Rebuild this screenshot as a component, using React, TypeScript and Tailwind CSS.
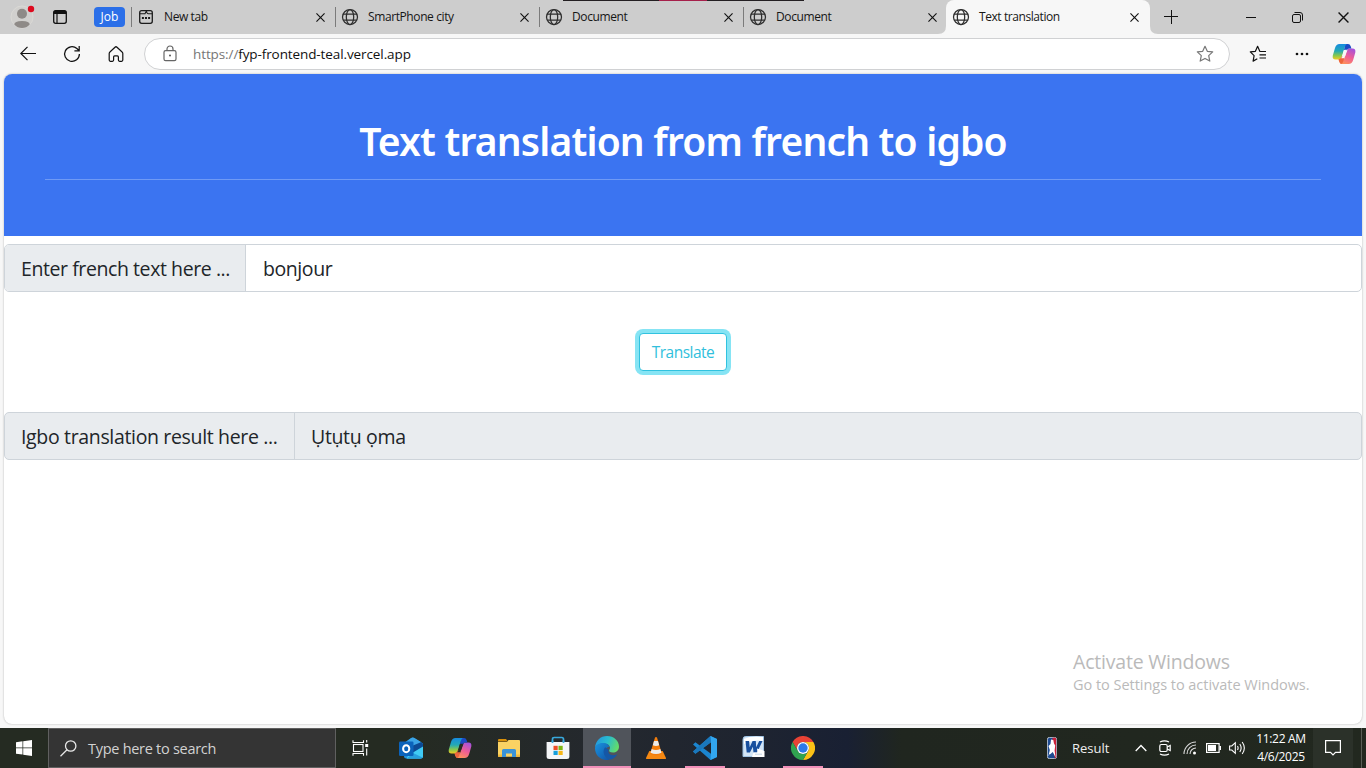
import type { ReactNode } from "react";

function Globe() {
  return (
    <svg width="18" height="18" viewBox="0 0 18 18" fill="none" stroke="#2e2e2e" strokeWidth="1.25" className="shrink-0">
      <circle cx="9" cy="9" r="7.5" />
      <ellipse cx="9" cy="9" rx="3.7" ry="7.5" />
      <path d="M2 6h14M2 12h14" />
    </svg>
  );
}

function NewTabIcon() {
  return (
    <svg width="16" height="16" viewBox="0 0 16 16" fill="none" stroke="#1b1b1b" strokeWidth="1.3" className="shrink-0">
      <rect x="1.700" y="1.700" width="12.600" height="12.600" rx="2" />
      <path d="M1.700 4.700h5.300l1.500-3M8.400 1.700q.3 3 2 3h3.900" strokeWidth="1.1" />
      <path d="M3.900 9h2M7 9h2M10.100 9h2" strokeWidth="1.8" />
    </svg>
  );
}

function Cross({ size = 9 }: { size?: number }) {
  return (
    <svg width={size} height={size} viewBox="0 0 10 10" fill="none" stroke="#111" strokeWidth="1.25" className="shrink-0">
      <path d="M.5.5l9 9M9.500.5l-9 9" />
    </svg>
  );
}

function Tab({ title, icon }: { title: string; icon: ReactNode }) {
  return (
    <div className="flex h-[34px] w-[204px] shrink-0 items-center">
      <div className="h-5 w-px bg-[#7b7b7b]" />
      <div className="flex w-[32px] items-center pl-[5px]">{icon}</div>
      <span className="grow whitespace-nowrap text-[12px] tracking-[-0.4px] text-[#161616]">{title}</span>
      <div className="mr-[10px] flex">
        <Cross />
      </div>
    </div>
  );
}

function TabStrip() {
  return (
    <div className="relative flex h-[34px] shrink-0 items-center bg-[#cdcdcd]">
      <div className="absolute top-0 left-[563px] flex h-px w-[241px] bg-[#231f22]">
        <div className="ml-24 h-px w-12 bg-[#a6204b]" />
      </div>
      <svg width="26" height="26" viewBox="0 0 26 26" className="ml-[10px] shrink-0">
        <circle cx="12" cy="13" r="11" fill="#d1d0ce" stroke="#dcdad7" strokeWidth=".8" />
        <circle cx="12" cy="9.800" r="5" fill="#8e8a87" />
        <path d="M4.300 20.500q0-3.600 7.700-3.600t7.700 3.600q-3 3.600-7.700 3.600t-7.700-3.600z" fill="#8e8a87" />
        <circle cx="21" cy="5" r="3.200" fill="#dd0a1e" />
      </svg>
      <svg width="16" height="16" viewBox="0 0 16 16" className="ml-[16px] shrink-0">
        <rect x="1.700" y="1.700" width="12.600" height="12.600" rx="2" fill="none" stroke="#111" strokeWidth="1.300" />
        <path d="M1.500 5V3.500a2 2 0 0 1 2-2h9a2 2 0 0 1 2 2V5z" fill="#111" />
        <path d="M5 4v10" stroke="#111" strokeWidth="1.200" />
      </svg>
      <div className="ml-[26px] flex h-5 w-[31px] shrink-0 items-center justify-center rounded-[4px] bg-[#2b6fe8] text-[12px] text-white">Job</div>
      <div className="ml-[6px] flex">
        <Tab title="New tab" icon={<span className="pl-[1px]"><NewTabIcon /></span>} />
        <Tab title="SmartPhone city" icon={<Globe />} />
        <Tab title="Document" icon={<Globe />} />
        <Tab title="Document" icon={<Globe />} />
      </div>
      <div className="relative -ml-px flex h-[34px] w-[204px] shrink-0 items-center rounded-t-[8px] bg-[#f7f7f7] pl-[6px]">
        <svg width="8" height="8" viewBox="0 0 8 8" className="absolute bottom-0 -left-2">
          <path d="M8 0v8H0q8 0 8-8z" fill="#f7f7f7" />
        </svg>
        <svg width="8" height="8" viewBox="0 0 8 8" className="absolute -right-2 bottom-0">
          <path d="M0 0v8h8q-8 0-8-8z" fill="#f7f7f7" />
        </svg>
        <Globe />
        <span className="ml-[9px] grow whitespace-nowrap text-[12px] tracking-[-0.42px] text-[#161616]">Text translation</span>
        <div className="mr-[11px] flex">
          <Cross />
        </div>
      </div>
      <svg width="14" height="14" viewBox="0 0 14 14" stroke="#111" className="ml-[14px] shrink-0">
        <path d="M7.500 0v14M0 6.500h14" />
      </svg>
      <svg width="10" height="10" viewBox="0 0 10 10" stroke="#111" className="ml-[68px] shrink-0">
        <path d="M0 5.500h10" />
      </svg>
      <svg width="11" height="11" viewBox="0 0 11 11" fill="none" stroke="#111" className="ml-[36px] shrink-0">
        <rect x=".5" y="2.500" width="8" height="8" rx="1.500" />
        <path d="M2.500.5h5.500a2.500 2.500 0 0 1 2.500 2.500v5.500" />
      </svg>
      <div className="ml-[35px] flex">
        <Cross size={11} />
      </div>
    </div>
  );
}

function Copilot({ id, gap, className }: { id: string; gap: string; className?: string }) {
  return (
    <svg width="24" height="24" viewBox="0 0 24 24" className={className}>
      <defs>
        <linearGradient id={id + "a"} x1="0" y1="0" x2="0" y2="1">
          <stop offset="0" stopColor="#168be0" />
          <stop offset=".45" stopColor="#24a9b5" />
          <stop offset=".75" stopColor="#8ac84c" />
          <stop offset="1" stopColor="#f2cb22" />
        </linearGradient>
        <linearGradient id={id + "b"} x1=".8" y1="0" x2=".3" y2="1">
          <stop offset="0" stopColor="#a452dd" />
          <stop offset=".5" stopColor="#ee5c97" />
          <stop offset="1" stopColor="#ff9358" />
        </linearGradient>
      </defs>
      <path d="M16 6.500h4.500Q24 6.500 23.300 10.500l-2 7q-1.200 4.500-4.800 4.500H10q-2 0-2.800-2.500l-.6-2.200H12z" fill={"url(#" + id + "b)"} />
      <path d="M13 2h3q2 0 2.700 2.200l.7 2.300H17q-1.500 0-2.100 2L12 8z" fill="#1b4ac5" />
      <path d="M7.500 2h7.300q-1.500.8-2 3L10 14q-1 3.500-3.600 3.500H3.500Q0 17.500.8 13.500L3 6Q4.200 2 7.500 2z" fill={"url(#" + id + "a)"} />
      <path d="M6.500 17.500q2.500-.3 3.500-3.500h3L11 20q-.7 2-2 2-1.200-.6-1.800-2.400z" fill="#ed663d" />
      <path d="M11.700 8.700q.3-1 1.300-1h2l-2.300 7.600q-.3 1-1.300 1H9.200q.8-1 1.200-2.300z" fill={gap} />
    </svg>
  );
}

function Toolbar() {
  return (
    <div className="flex h-10 shrink-0 items-center bg-[#f7f7f7]">
      <svg width="16" height="16" viewBox="0 0 16 16" fill="none" stroke="#111" strokeWidth="1.200" className="ml-[20px] shrink-0">
        <path d="M16 7.500H.8M7.500.8L.8 7.500l6.700 6.700" />
      </svg>
      <svg width="18" height="18" viewBox="0 0 18 18" fill="none" stroke="#111" strokeWidth="1.250" className="ml-[27px] shrink-0">
        <path d="M16.400 9a7.400 7.400 0 1 1-2.500-5.500L16 5.600M16.200 1v4.800h-4.800" />
      </svg>
      <svg width="16" height="16" viewBox="0 0 16 16" fill="none" stroke="#111" strokeWidth="1.200" className="ml-[27px] shrink-0">
        <path d="M1.200 7.500q0-.9.700-1.500L7 1.200q1-.9 2 0L14.100 6q.7.600.7 1.500v6.600q0 1.200-1.200 1.200h-2q-1.200 0-1.200-1.200v-3.200q0-1-1-1H6.600q-1 0-1 1v3.200q0 1.200-1.200 1.200h-2q-1.200 0-1.200-1.200z" />
      </svg>
      <div className="ml-[20px] flex h-8 w-[1086px] shrink-0 items-center rounded-full border border-[#d0d1d3] bg-white">
        <svg width="14" height="17" viewBox="0 0 14 17" fill="none" stroke="#666" strokeWidth="1.200" className="mb-[2px] ml-[18px] shrink-0">
          <rect x="1" y="5.600" width="12" height="10" rx="1.600" />
          <path d="M4 5.600V4a3 3 0 0 1 6 0v1.600" />
          <circle cx="7" cy="10.600" r="1" fill="#555" stroke="none" />
        </svg>
        <span className="ml-[16px] grow text-[13.500px] tracking-[-0.1px] text-[#111]">
          <span className="text-[#767676]">https://</span>fyp-frontend-teal.vercel.app
        </span>
        <svg width="18" height="18" viewBox="0 0 18 18" fill="none" stroke="#777" strokeWidth="1.200" strokeLinejoin="round" className="mr-[15px] shrink-0">
          <path d="M9 1.300l2.300 5 5.400.6-4 3.700 1.100 5.500L9 13.400l-4.800 2.700 1.100-5.500-4-3.700 5.400-.6z" />
        </svg>
      </div>
      <svg width="18" height="18" viewBox="0 0 18 18" fill="none" stroke="#111" strokeWidth="1.200" strokeLinejoin="round" className="ml-[19px] shrink-0">
        <path d="M12 6.500l-1.200-.2L8.600 1.300l-2.200 5-5.100.6 3.800 3.700-1 5.500 4.200-2.300M12 6.500h5M10.500 9.800H17M10.500 13H17" />
      </svg>
      <svg width="14" height="4" viewBox="0 0 14 4" fill="#111" className="ml-[28px] shrink-0">
        <circle cx="2" cy="2" r="1.350" />
        <circle cx="7" cy="2" r="1.350" />
        <circle cx="12" cy="2" r="1.350" />
      </svg>
      <Copilot id="bar" gap="#f7f7f7" className="ml-[23px] shrink-0" />
    </div>
  );
}

function Page() {
  return (
    <div className="flex grow bg-[#f7f7f7] px-1 pb-1">
      <div className="flex grow flex-col overflow-hidden rounded-[8px] bg-white shadow-[0_0_2px_#aaa]">
        <header className="h-[162px] bg-[#3b74f1] px-[41px] pt-[43px]">
          <h1 className="h-[48px] text-center font-['Noto_Sans'] text-[39px] leading-[48px] font-semibold tracking-[-0.82px] whitespace-nowrap text-white">Text translation from french to igbo</h1>
          <div className="mt-[14px] h-px bg-[#6f9af5]" />
        </header>
        <div className="mt-2 flex h-12 overflow-hidden rounded-[5px] border border-[#ced4da] text-[19.500px] tracking-[-0.42px] text-[#212529]">
          <div className="flex w-[241px] items-center border-r border-[#ced4da] bg-[#e9ecef] pt-[2px] pl-4 whitespace-nowrap">Enter french text here ...</div>
          <div className="flex grow items-center pt-[2px] pl-[17px]">bonjour</div>
        </div>
        <div className="flex h-[120px] items-center justify-center">
          <button className="h-[38px] w-[88px] rounded-[4px] border border-[#31c2df] bg-white pt-[2px] text-[15.500px] tracking-[-0.5px] text-[#31bfdc] shadow-[0_0_0_4px_#86e4f4]">Translate</button>
        </div>
        <div className="flex h-12 overflow-hidden rounded-[5px] border border-[#ced4da] bg-[#e9ecef] text-[19.500px] tracking-[-0.34px] text-[#212529]">
          <div className="flex w-[290px] items-center border-r border-[#ced4da] pt-[2px] pl-4 whitespace-nowrap">Igbo translation result here ...</div>
          <div className="flex grow items-center pt-[2px] pl-4">Ụtụtụ ọma</div>
        </div>
        <div className="mt-auto mb-[29px] ml-[1069px] whitespace-nowrap text-[#bababa]">
          <div className="text-[19.500px] leading-[26px] tracking-[-0.2px]">Activate Windows</div>
          <div className="text-[14.500px] leading-5 tracking-[-0.03px]">Go to Settings to activate Windows.</div>
        </div>
      </div>
    </div>
  );
}

function TaskItem({ children, active, open }: { children: ReactNode; active?: boolean; open?: boolean }) {
  return (
    <div className={active ? "flex h-10 w-12 shrink-0 flex-col items-center bg-[#50545b]" : "flex h-10 w-12 shrink-0 flex-col items-center"}>
      <div className="flex h-[38px] items-center pt-[2px]">{children}</div>
      {active && <div className="h-[2px] w-12 bg-[#f08fb9]" />}
      {open && <div className="h-[2px] w-10 bg-[#f08fb9]" />}
    </div>
  );
}

function Outlook() {
  return (
    <svg width="24" height="24" viewBox="0 0 24 24">
      <path d="M4 8l8-6q1.500-1 3 0l9 5.500V20q0 2.500-2.500 2.500h-14Q5 22.500 5 20z" fill="#1f8fdf" />
      <path d="M5 7l7.500-5q1.500-.8 3 0L22 6l-8 6z" fill="#3ba4e6" />
      <path d="M14 9.500L22.500 6 24 8v3l-10 6z" fill="#0c4a94" />
      <path d="M24 10.500V20q0 2.500-2.500 2.500H7.500L9 20l5-3.500z" fill="#40cbf4" />
      <path d="M14 17l9.500 4.500q-.8 1-2 1H8z" fill="#279fde" />
      <rect x="0" y="5.500" width="14.500" height="14.500" rx="1.300" fill="#0b63bb" />
      <ellipse cx="7.200" cy="12.700" rx="3.100" ry="3.500" fill="none" stroke="#fff" strokeWidth="2" />
    </svg>
  );
}

function Explorer() {
  return (
    <svg width="24" height="24" viewBox="0 0 24 24">
      <path d="M1 4q0-1 1-1h7l2 2.500H1z" fill="#d99009" />
      <path d="M1 6h9l1.500-2H22q1 0 1 1v15q0 .8-.8.8H1.800Q1 20.800 1 20z" fill="#fad263" />
      <path d="M5 21v-6.500q0-1.500 1.500-1.500h11q1.500 0 1.500 1.500V21h-4v-3.500H9V21z" fill="#3a93d8" />
      <path d="M1 18.600h4v2.200H1zM19 18.600h4v2.200h-4z" fill="#f3bb3c" />
    </svg>
  );
}

function Store() {
  return (
    <svg width="24" height="24" viewBox="0 0 24 24">
      <path d="M6.500 7V3.200q0-1.700 1.700-1.700h7.600q1.700 0 1.700 1.700V7" fill="none" stroke="#38a9dd" strokeWidth="1.700" />
      <path d="M.6 6h22.800v14.500q0 2.500-2.500 2.500H3.100Q.6 23 .6 20.500z" fill="#f4f5f7" />
      <path d="M6.500 4.500V7M17.500 4.500V7" stroke="#38a9dd" strokeWidth="1.700" />
      <path d="M7.500 9.800h4.200V14H7.500z" fill="#ef4e27" />
      <path d="M12.500 9.800h4.200V14h-4.200z" fill="#7db713" />
      <path d="M7.500 14.800h4.200V19H7.500z" fill="#169fdc" />
      <path d="M12.500 14.800h4.200V19h-4.200z" fill="#f8b716" />
    </svg>
  );
}

function Edge() {
  return (
    <svg width="24" height="24" viewBox="0 0 24 24">
      <defs>
        <linearGradient id="edge-top" x1="0" y1=".2" x2="1" y2=".5">
          <stop offset="0" stopColor="#2493df" />
          <stop offset=".5" stopColor="#28bdce" />
          <stop offset="1" stopColor="#64dc69" />
        </linearGradient>
        <linearGradient id="edge-low" x1="0" y1="0" x2="1" y2="1">
          <stop offset="0" stopColor="#1a94df" />
          <stop offset="1" stopColor="#1050a4" />
        </linearGradient>
      </defs>
      <path d="M0 12C.5 4.500 5.500 0 12 0c7 0 12 5 12 10.500 0 4-3 6-6 6-3.300 0-4.300-1.300-3.700-2.500 2.200-3-.8-6.500-4.800-6.500C4.500 7.500 1 9 0 12z" fill="url(#edge-top)" />
      <path d="M0 12c1-3.300 4.700-5.300 9-4.900 3 .2 5 2 5.300 3.900-4 0-6 4.500-4.400 8 1 2.300 3.500 4.500 5.600 4.600C7 25.800 0 20 0 12z" fill="url(#edge-low)" />
      <path d="M10.200 11.200c-4.500 5.500 1.500 12.300 5.500 12.200 3-.6 5.300-2.800 6.600-5.200-5 2.200-10.500.5-8.500-4.400z" fill="#1557a6" />
    </svg>
  );
}

function Vlc() {
  return (
    <svg width="22" height="24" viewBox="0 0 22 24">
      <path d="M4.300 15h13.400l3.300 7q.4 1-.8 1H1.800Q.6 23 1 22z" fill="#f58812" />
      <path d="M10 1.500q1-.8 2 0l4.900 16.300q-5.900 3.300-11.800 0z" fill="#f37d0c" />
      <path d="M9 5h4l1.200 4.200q-3.200 1.400-6.400 0zM6.700 13q4.300 2 8.600 0l1.200 3.700q-5.500 2.800-11 0z" fill="#ecebe9" />
    </svg>
  );
}

function Code() {
  return (
    <svg width="24" height="24" viewBox="0 0 24 24">
      <path d="M17.500 24L0 8.600l2.400-2.300L18 17.800V6.200L2.400 17.700 0 15.400 17.500 0 24 3v18z" fill="#1b85cf" />
      <path d="M17.500 0L0 15.400l2.400 2.300L18 6.200V0z" fill="#1a78bd" />
      <path d="M17.500 0L24 3v18l-6.500 3 .5-6V6z" fill="#32a6ef" />
    </svg>
  );
}

function Word() {
  return (
    <svg width="23" height="22" viewBox="0 0 23 22" className="mr-px mb-[3px]">
      <path d="M3.500.5h18v20H1v-17q0-3 2.500-3z" fill="#d3e5f6" stroke="#9fc3e4" />
      <path d="M2 3Q9-.5 21 1v4Q12 3 2 8z" fill="#fff" />
      <path d="M3.500 5h3.600l.6 6.200L10.600 5h3.200l.4 6.200L17.200 5h3.300L15 16.500h-3.500l-.6-5.800-3 5.800H4.700z" fill="#174f9e" />
      <path d="M15 12.500l7.500 2.500V21H10l1.500-4.500h4z" fill="#fff" />
      <path d="M13 18.200h7" stroke="#c5d7e8" />
    </svg>
  );
}

function Chrome() {
  return (
    <svg width="24" height="24" viewBox="0 0 24 24">
      <path d="M1.600 6A12 12 0 0 1 22.400 6H12a6 6 0 0 0-5.200 9z" fill="#e84235" />
      <path d="M22.400 6A12 12 0 0 1 12 24l5.200-9A6 6 0 0 0 12 6z" fill="#fbc116" />
      <path d="M1.600 6A12 12 0 0 0 12 24l5.200-9a6 6 0 0 1-10.400 0z" fill="#30a350" />
      <circle cx="12" cy="12" r="6" fill="#fff" />
      <circle cx="12" cy="12" r="4.700" fill="#2c79e8" />
    </svg>
  );
}

function Taskbar() {
  return (
    <div className="flex h-10 shrink-0 items-center bg-linear-[90deg,#252b22_0%,#252b22_30%,#24282e_44%,#1e2430_55%,#192033_62%,#20261f_66%,#22281f_100%]">
      <div className="flex w-12 shrink-0 justify-center">
        <svg width="16" height="16" viewBox="0 0 16 16" fill="#fff">
          <path d="M0 2.200L6.500 1.300v6.300H0zM7.200 1.200L16 0v7.600H7.200zM0 8.300h6.500v6.300L0 13.700zM7.200 8.300H16V16l-8.800-1.200z" />
        </svg>
      </div>
      <div className="flex h-10 w-[288px] shrink-0 items-center border border-[#606060] bg-[#343434] pl-[11px]">
        <svg width="17" height="17" viewBox="0 0 17 17" fill="none" stroke="#e8e8e8" strokeWidth="1.300" className="shrink-0">
          <circle cx="10.700" cy="6" r="5.200" />
          <path d="M7 9.800L.5 16.300" />
        </svg>
        <span className="ml-[11px] pt-[2px] text-[14.500px] tracking-[-0.28px] text-[#d2d2d2]">Type here to search</span>
      </div>
      <div className="flex w-12 shrink-0 justify-center">
        <svg width="17" height="16" viewBox="0 0 17 16" fill="none" stroke="#fff" strokeWidth="1.100">
          <path d="M1 .2v2.300h10.500V.2M1 15.800v-2.300h10.500v2.300M14.700 0v2.600M14.700 8.500V15.500" />
          <rect x="1.500" y="4.500" width="9.500" height="7" />
          <path d="M13.200 4h3v3h-3z" fill="#fff" stroke="none" />
        </svg>
      </div>
      <div className="ml-[3px] flex gap-px">
        <TaskItem><Outlook /></TaskItem>
        <TaskItem><Copilot id="task" gap="#252b22" /></TaskItem>
        <TaskItem><Explorer /></TaskItem>
        <TaskItem><Store /></TaskItem>
        <TaskItem active><Edge /></TaskItem>
        <TaskItem><Vlc /></TaskItem>
        <TaskItem open><Code /></TaskItem>
        <TaskItem><Word /></TaskItem>
        <TaskItem open><Chrome /></TaskItem>
      </div>
      <div className="ml-auto flex h-10 items-center text-white">
        <svg width="10" height="22" viewBox="0 0 10 22" className="shrink-0">
          <rect x=".4" y=".4" width="9.200" height="21.200" rx="2" fill="#1e4b91" stroke="#dbe2ed" strokeWidth=".8" />
          <path d="M5.500.8H8q1.200 0 1.200 1.400v17.500q0 1.500-1.200 1.500L6 13z" fill="#cb2038" />
          <path d="M4 2.500l2.300.5.700 3.500 1.200 2-.6 5 1 7-2.800-5.500L3.500 17 1.500 19l1.300-6L1.500 9l2-2z" fill="#fff" />
          <path d="M2 17.500h3.500v3H2z" fill="#1e4b91" />
        </svg>
        <span className="ml-[15px] w-[63px] pt-px text-[13px] text-[#eee]">Result</span>
        <svg width="12" height="8" viewBox="0 0 12 8" fill="none" stroke="#fff" strokeWidth="1.300" className="shrink-0">
          <path d="M.7 7L6 1.500 11.300 7" />
        </svg>
        <svg width="12" height="16" viewBox="0 0 12 16" fill="none" stroke="#fff" strokeWidth="1.200" className="ml-[12px] shrink-0">
          <rect x=".8" y="4.500" width="7.400" height="7" rx="1.500" />
          <path d="M8.200 7l3-1.500v5L8.200 9M1 2Q5.500-.3 10 2M1 14q4.500 2.300 9 0" />
        </svg>
        <svg width="14" height="14" viewBox="0 0 14 14" fill="none" stroke="#d9d9d9" strokeWidth="1.100" className="ml-[12px] shrink-0">
          <path d="M1 13A12 12 0 0 1 13 1M4 13a9 9 0 0 1 9-9M7 13a6 6 0 0 1 6-6" />
          <circle cx="11.500" cy="12" r="1.500" fill="#fff" stroke="none" />
        </svg>
        <svg width="15" height="10" viewBox="0 0 15 10" className="ml-[9px] shrink-0">
          <rect x=".6" y=".6" width="12.500" height="8.800" fill="none" stroke="#fff" strokeWidth="1.200" />
          <path d="M2 2h8v6H2zM13.500 3H15v4h-1.500z" fill="#fff" />
        </svg>
        <svg width="17" height="14" viewBox="0 0 17 14" fill="none" stroke="#fff" strokeWidth="1.100" className="ml-[8px] shrink-0">
          <path d="M.6 5h2.200l3.500-3.300v10.600L2.800 9H.6zM8.500 5q1.200 2 0 4M10.800 3q2.700 4 0 8M13.200 1q4.300 6 0 12" />
        </svg>
        <div className="ml-[7px] flex w-[56px] shrink-0 flex-col items-center whitespace-nowrap text-[12px] leading-[18px] tracking-[-0.3px]">
          <span>11:22 AM</span>
          <span>4/6/2025</span>
        </div>
        <div className="ml-[4px] flex h-10 w-10 shrink-0 items-center justify-center bg-[#2b3129]">
          <svg width="16" height="16" viewBox="0 0 16 16" fill="none" stroke="#fff" strokeWidth="1.200">
            <path d="M.6.6h14.800v11.800H10.500L8 15l-2.500-2.600H.6z" />
          </svg>
        </div>
        <div className="mr-1 ml-2 h-10 w-px bg-[#595e56]" />
      </div>
    </div>
  );
}

export default function App() {
  return (
    <div className="flex h-[768px] w-[1366px] flex-col overflow-hidden font-['Open_Sans','Noto_Sans',sans-serif]">
      <TabStrip />
      <Toolbar />
      <Page />
      <Taskbar />
    </div>
  );
}
